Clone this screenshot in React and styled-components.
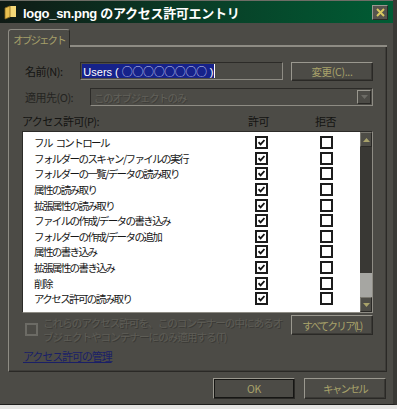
import React from "react";
import styled, { createGlobalStyle } from "styled-components";

const GlobalStyle = createGlobalStyle`
  html, body {
    margin: 0;
    padding: 0;
    background: #e4e4e2;
  }
  body {
    font-family: "Noto Sans CJK JP", sans-serif;
  }
`;

const Window = styled.div`
  width: 393px;
  height: 404px;
  background: #4c4b46;
  border-right: 4px solid #3a3935;
  border-bottom: 1px solid #1e1e1c;
  display: flex;
  flex-direction: column;
  overflow: hidden;
`;

const TitleBar = styled.div`
  height: 22px;
  flex-shrink: 0;
  display: flex;
  align-items: center;
  padding: 0 3px 0 4px;
  background: linear-gradient(90deg, #0f1a15 0%, #0a3a25 45%, #005c34 100%);
  border-top: 1px solid #6e6d66;
`;

const Title = styled.div`
  flex: 1;
  margin-left: 6px;
  color: #ffffff;
  font-size: 13px;
  font-weight: bold;
  letter-spacing: -0.3px;
  font-family: "Liberation Sans", "Noto Sans CJK JP", sans-serif;
`;

const CloseButton = styled.div`
  width: 14px;
  height: 13px;
  display: flex;
  align-items: center;
  justify-content: center;
  background: #55544e;
  border: 1px solid;
  border-color: #9a9890 #2a2926 #2a2926 #9a9890;
  margin-right: 2px;
`;

const Content = styled.div`
  flex: 1;
  min-height: 0;
  display: flex;
  flex-direction: column;
  padding: 5px 6px 0 8px;
`;

const TabStrip = styled.div`
  display: flex;
  align-items: flex-end;
  height: 19px;
  flex-shrink: 0;
`;

const Tab = styled.div`
  height: 18px;
  width: 60px;
  display: flex;
  align-items: center;
  justify-content: center;
  color: #a6a06a;
  font-size: 10.5px;
  letter-spacing: -1.9px;
  border: 1px solid #8e8c84;
  border-bottom: none;
  border-right-color: #2a2926;
  border-radius: 3px 3px 0 0;
  background: #4c4b46;
  position: relative;
  z-index: 1;
  margin-bottom: -1px;
`;

const TabLine = styled.div`
  flex: 1;
  border-bottom: 2px solid #8e8c84;
`;

const Panel = styled.div`
  height: 325px;
  flex-shrink: 0;
  overflow: hidden;
  box-sizing: border-box;
  border: 1px solid;
  border-color: transparent #2a2926 #2a2926 #8e8c84;
  border-top: none;
  box-shadow: inset -1px -1px 0 #3e3d39;
  padding: 15px 13px 0 13px;
  display: flex;
  flex-direction: column;
`;

const FieldRow = styled.div`
  display: flex;
  align-items: center;
  height: 18px;
  flex-shrink: 0;
  margin-bottom: ${(p) => p.$gap || 0}px;
`;

const Label = styled.div`
  width: ${(p) => p.$w}px;
  padding-left: 3px;
  color: ${(p) => (p.$muted ? "#242421" : "#141412")};
  font-size: 11px;
  letter-spacing: -0.5px;
`;

const TextBox = styled.div`
  width: 202px;
  height: 16px;
  display: flex;
  align-items: center;
  padding-left: 1px;
  border: 1px solid;
  border-color: #2c2b28 #8e8c84 #8e8c84 #2c2b28;
  background: #4c4b46;
`;

const Selection = styled.span`
  background: #16228a;
  color: #ffffff;
  font-size: 11px;
  height: 14px;
  line-height: 14px;
  padding: 0 1px;
  font-family: "Liberation Sans", "Noto Sans CJK JP", sans-serif;
  border-right: 1px solid #ffffff;
  white-space: nowrap;
`;

const Circles = styled.span`
  font-family: "Noto Sans CJK JP", sans-serif;
  letter-spacing: -0.4px;
  color: #c8ccf0;
`;

const Button = styled.div`
  width: ${(p) => p.$w || 80}px;
  height: ${(p) => p.$h || 17}px;
  margin-left: ${(p) => p.$ml || 0}px;
  flex-shrink: 0;
  display: flex;
  align-items: center;
  justify-content: center;
  color: #a8a26a;
  font-size: 10.5px;
  letter-spacing: ${(p) => (p.$tight ? -1.7 : -0.3)}px;
  background: #4c4b46;
  border: 1px solid;
  border-color: #9a988f #2a2926 #2a2926 #9a988f;
  box-shadow: ${(p) => (p.$default ? "inset 0 0 0 1px #161614" : "inset -1px -1px 0 #3a3935")};
`;

const Combo = styled.div`
  width: 282px;
  height: 16px;
  display: flex;
  align-items: center;
  justify-content: space-between;
  border: 1px solid;
  border-color: #2c2b28 #8e8c84 #8e8c84 #2c2b28;
  padding: 0 1px 0 3px;
`;

const ComboText = styled.span`
  color: #62615a;
  font-size: 10.5px;
  letter-spacing: -1.3px;
  text-shadow: 1px 1px 0 #3e3d39;
`;

const ComboArrow = styled.div`
  width: 12px;
  height: 12px;
  display: flex;
  align-items: center;
  justify-content: center;
  border: 1px solid;
  border-color: #9a988f #2a2926 #2a2926 #9a988f;
`;

const PermHeader = styled.div`
  display: grid;
  grid-template-columns: 223px 67px 50px;
  align-items: center;
  height: 14px;
  flex-shrink: 0;
  margin-top: 7px;
  color: #141412;
  font-size: 11px;
  letter-spacing: -0.6px;
`;

const HeadCell = styled.div`
  padding-left: ${(p) => p.$pl || 0}px;
`;

const ListBox = styled.div`
  margin-top: 4px;
  height: 180px;
  flex-shrink: 0;
  display: flex;
  border: 1px solid;
  border-color: #2c2b28 #8e8c84 #8e8c84 #2c2b28;
`;

const List = styled.div`
  flex: 1;
  background: #ffffff;
  padding-top: 3px;
`;

const Row = styled.div`
  display: grid;
  grid-template-columns: 232px 65px 40px;
  align-items: center;
  height: 15.6px;
`;

const RowText = styled.div`
  padding-left: 11px;
  color: #161616;
  font-size: 10.5px;
  letter-spacing: -1.6px;
  white-space: pre;
`;

const Box = styled.div`
  width: 9px;
  height: 9px;
  border: 2px solid ${(p) => (p.$disabled ? "#6c6b65" : "#1c1c1c")};
  background: ${(p) => (p.$disabled ? "#4c4b46" : "#ffffff")};
  display: flex;
  align-items: center;
  justify-content: center;
`;

const ScrollBar = styled.div`
  width: 15px;
  display: flex;
  flex-direction: column;
  background: #393834;
`;

const ScrollButton = styled.div`
  height: 15px;
  display: flex;
  align-items: center;
  justify-content: center;
  background: #4e4d47;
  border: 1px solid;
  border-color: #7a7870 #2a2926 #2a2926 #7a7870;
  box-sizing: border-box;
`;

const Track = styled.div`
  flex: 1;
  display: flex;
  flex-direction: column;
  justify-content: flex-end;
`;

const Thumb = styled.div`
  height: 24px;
  background: #a6a6a2;
`;

const InheritRow = styled.div`
  display: flex;
  align-items: flex-start;
  margin-top: 2px;
  flex-shrink: 0;
`;

const InheritText = styled.div`
  flex: 1;
  min-width: 0;
  margin-left: 5px;
  padding-top: 1px;
  display: flex;
  flex-direction: column;
`;

const InheritLine = styled.div`
  height: 14px;
  line-height: 14px;
  overflow: hidden;
  color: #5e5d56;
  font-size: 10.5px;
  letter-spacing: -0.9px;
  white-space: nowrap;
  text-shadow: 1px 1px 0 #3a3935;
`;

const CheckSlot = styled.div`
  padding: 8px 0 0 3px;
`;

const Link = styled.div`
  margin-top: 6px;
  padding-left: 1px;
  color: #1a1f66;
  font-size: 11px;
  line-height: 13px;
  letter-spacing: -1.1px;
  text-decoration: underline;
`;

const Footer = styled.div`
  display: flex;
  justify-content: flex-end;
  gap: 9px;
  padding: 6px 1px 0 0;
  flex-shrink: 0;
`;

const permissions = [
  "フル\u2002コントロール",
  "フォルダーのスキャン/ファイルの実行",
  "フォルダーの一覧/データの読み取り",
  "属性の読み取り",
  "拡張属性の読み取り",
  "ファイルの作成/データの書き込み",
  "フォルダーの作成/データの追加",
  "属性の書き込み",
  "拡張属性の書き込み",
  "削除",
  "アクセス許可の読み取り",
];

function Check({ checked, disabled }) {
  return (
    <Box $disabled={disabled}>
      {checked && (
        <svg width="7" height="7" viewBox="0 0 7 7">
          <path d="M0.5 3.2 L2.6 5.4 L6.5 1" stroke="#111" strokeWidth="1.8" fill="none" />
        </svg>
      )}
    </Box>
  );
}

function FolderIcon() {
  return (
    <svg width="13" height="15" viewBox="0 0 13 15">
      <path d="M1 3 L6 1 L6 12 L1 14 Z" fill="#e8c050" />
      <path d="M6 1 L12 1 L12 12 L6 12 Z" fill="#f4d878" />
      <path d="M1 3 L6 1 L6 12 L1 14 Z" fill="none" stroke="#8a6a20" strokeWidth="0.8" />
    </svg>
  );
}

export default function App() {
  return (
    <>
      <GlobalStyle />
      <Window>
        <TitleBar>
          <FolderIcon />
          <Title>logo_sn.png のアクセス許可エントリ</Title>
          <CloseButton>
            <svg width="9" height="9" viewBox="0 0 9 9">
              <path d="M1 1 L8 8 M8 1 L1 8" stroke="#d8c860" strokeWidth="2" />
            </svg>
          </CloseButton>
        </TitleBar>
        <Content>
          <TabStrip>
            <Tab>オブジェクト</Tab>
            <TabLine />
          </TabStrip>
          <Panel>
            <FieldRow $gap={8}>
              <Label $w={56}>名前(N):</Label>
              <TextBox>
                <Selection>
                  Users ( <Circles>○○○○○○○○</Circles> )
                </Selection>
              </TextBox>
              <Button $ml={8} $w={80}>変更(C)...</Button>
            </FieldRow>
            <FieldRow>
              <Label $w={66} $muted>適用先(O):</Label>
              <Combo>
                <ComboText>このオブジェクトのみ</ComboText>
                <ComboArrow>
                  <svg width="7" height="5" viewBox="0 0 7 5">
                    <path d="M0 0 L7 0 L3.5 4 Z" fill="#6c6b65" />
                  </svg>
                </ComboArrow>
              </Combo>
            </FieldRow>
            <PermHeader>
              <HeadCell>アクセス許可(P):</HeadCell>
              <HeadCell $pl={3}>許可</HeadCell>
              <HeadCell $pl={3}>拒否</HeadCell>
            </PermHeader>
            <ListBox>
              <List>
                {permissions.map((name) => (
                  <Row key={name}>
                    <RowText>{name}</RowText>
                    <Check checked />
                    <Check />
                  </Row>
                ))}
              </List>
              <ScrollBar>
                <ScrollButton>
                  <svg width="7" height="4" viewBox="0 0 7 4">
                    <path d="M0 4 L7 4 L3.5 0 Z" fill="#a8a26a" />
                  </svg>
                </ScrollButton>
                <Track>
                  <Thumb />
                </Track>
                <ScrollButton>
                  <svg width="7" height="4" viewBox="0 0 7 4">
                    <path d="M0 0 L7 0 L3.5 4 Z" fill="#a8a26a" />
                  </svg>
                </ScrollButton>
              </ScrollBar>
            </ListBox>
            <InheritRow>
              <CheckSlot>
                <Check disabled />
              </CheckSlot>
              <InheritText>
                <InheritLine>これらのアクセス許可を、このコンテナーの中にあるオ</InheritLine>
                <InheritLine>ブジェクトやコンテナーにのみ適用する(T)</InheritLine>
              </InheritText>
              <Button $w={80} $h={18} $tight>すべてクリア(L)</Button>
            </InheritRow>
            <Link>アクセス許可の管理</Link>
          </Panel>
          <Footer>
            <Button $w={80} $h={19} $default>OK</Button>
            <Button $w={80} $h={19} $tight>キャンセル</Button>
          </Footer>
        </Content>
      </Window>
    </>
  );
}
